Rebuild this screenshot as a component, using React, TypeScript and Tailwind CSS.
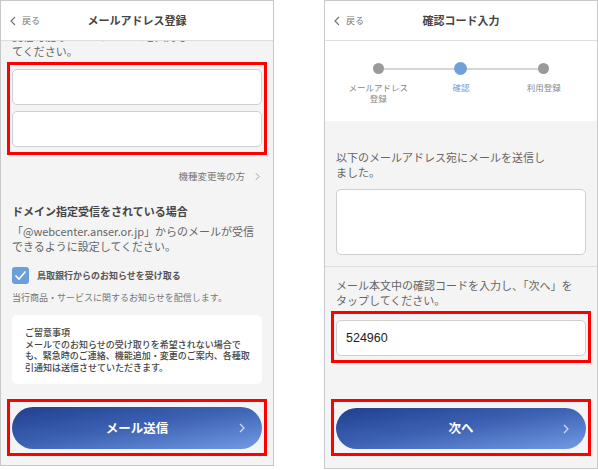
import React from "react";

const FONT = "font-['Noto_Sans_CJK_JP','Noto_Sans',sans-serif]";

function BackChevron() {
  return (
    <svg width="6" height="10" viewBox="0 0 6 10">
      <polyline points="5,1 1,5 5,9" fill="none" stroke="#777" strokeWidth="1.2" />
    </svg>
  );
}

function RightChevron({ color, w = 6, h = 10 }: { color: string; w?: number; h?: number }) {
  return (
    <svg width={w} height={h} viewBox="0 0 6 10">
      <polyline points="1,1 5,5 1,9" fill="none" stroke={color} strokeWidth="1.2" />
    </svg>
  );
}

function Header({ title }: { title: string }) {
  return (
    <div className="grid grid-cols-[1fr_auto_1fr] items-center h-[40px] shrink-0 bg-white border-b border-[#dedede] px-[9px]">
      <div className="flex items-center gap-[6px] text-[9px] text-[#777]">
        <BackChevron />
        <span>戻る</span>
      </div>
      <div className="text-[11px] font-bold text-[#444]">{title}</div>
      <div />
    </div>
  );
}

function GradButton({ label }: { label: string }) {
  return (
    <div className="relative flex items-center justify-center h-[42px] rounded-full bg-linear-to-br from-[#213f8e] via-[#3f64b5] to-[#739be4]">
      <span className="text-[12.5px] font-bold text-white">{label}</span>
      <div className="absolute right-[17px] top-0 bottom-0 flex items-center">
        <RightChevron color="#d2ddf5" w={6} h={10} />
      </div>
    </div>
  );
}

function LeftPhone() {
  return (
    <div className="w-[274px] h-[466px] shrink-0 border border-[#c8c8c8] flex flex-col overflow-hidden bg-[#f4f4f4]">
      <Header title="メールアドレス登録" />
      <div className="flex-1 overflow-hidden px-[11px]">
        <div className="mt-[-12px] text-[11px] leading-[15px] text-[#666] whitespace-nowrap">
          受信可能なメールアドレスを入力し
          <br />
          てください。
        </div>
        <div className="mt-[3px] -mx-[5px] border-[3px] border-[#ff0000] px-[2px] pt-[4px] pb-[5px] flex flex-col gap-[6px]">
          <div className="h-[36px] bg-white border border-[#cfcfcf] rounded-[5px]" />
          <div className="h-[36px] bg-white border border-[#cfcfcf] rounded-[5px]" />
        </div>
        <div className="mt-[13px] h-[16px] flex items-center justify-end gap-[10px] pr-[2px] text-[9.5px] text-[#777]">
          <span>機種変更等の方</span>
          <RightChevron color="#7aa6dc" w={5} h={9} />
        </div>
        <div className="mt-[19px] text-[11px] leading-[16px] font-bold text-[#444] whitespace-nowrap">
          ドメイン指定受信をされている場合
        </div>
        <div className="mt-[5px] text-[11px] leading-[15px] text-[#666] whitespace-nowrap">
          「@webcenter.anser.or.jp」からのメールが受信
          <br />
          できるように設定してください。
        </div>
        <div className="mt-[13px] flex items-center gap-[8px]">
          <div className="w-[17px] h-[17px] rounded-[3px] bg-[#6b9fd9] flex items-center justify-center">
            <svg width="13" height="11" viewBox="0 0 13 11">
              <polyline points="1.5,5.5 5,9 11.5,1.5" fill="none" stroke="white" strokeWidth="1.6" />
            </svg>
          </div>
          <span className="text-[9px] font-bold text-[#555]">鳥取銀行からのお知らせを受け取る</span>
        </div>
        <div className="mt-[7px] text-[9px] leading-[13px] text-[#777] whitespace-nowrap">
          当行商品・サービスに関するお知らせを配信します。
        </div>
        <div className="mt-[11px] bg-white rounded-[5px] px-[13px] pt-[12px] pb-[11px] text-[9px] leading-[11.5px] font-medium text-[#444] whitespace-nowrap">
          ご留意事項
          <br />
          メールでのお知らせの受け取りを希望されない場合で
          <br />
          も、緊急時のご連絡、機能追加・変更のご案内、各種取
          <br />
          引通知は送信させていただきます。
        </div>
        <div className="mt-[15px] -mx-[5px] border-[3px] border-[#ff0000] px-[2px] pt-[5px] pb-[4px]">
          <GradButton label="メール送信" />
        </div>
      </div>
    </div>
  );
}

function Step({ label, active }: { label: React.ReactNode; active?: boolean }) {
  return (
    <div className="flex flex-col items-center pt-[21px]">
      <div className="h-[13px] flex items-center justify-center">
        {active ? (
          <div className="w-[13px] h-[13px] rounded-full bg-[#6fa0d8]" />
        ) : (
          <div className="w-[11px] h-[11px] rounded-full bg-[#9a9a9a]" />
        )}
      </div>
      <div
        className={
          "mt-[7px] text-[8.5px] leading-[11px] text-center " +
          (active ? "text-[#6fa0d8]" : "text-[#888]")
        }
      >
        {label}
      </div>
    </div>
  );
}

function RightPhone() {
  return (
    <div className="w-[274px] h-[469px] shrink-0 border border-[#c8c8c8] flex flex-col overflow-hidden bg-[#f4f4f4]">
      <Header title="確認コード入力" />
      <div className="relative h-[80px] shrink-0 bg-white grid grid-cols-3 px-[12px]">
        <div className="absolute left-[54px] right-[54px] top-[26.5px] h-[2px] bg-[#d6d6d6]" />
        <div className="relative">
          <Step
            label={
              <>
                メールアドレス
                <br />
                登録
              </>
            }
          />
        </div>
        <div className="relative">
          <Step label="確認" active />
        </div>
        <div className="relative">
          <Step label="利用登録" />
        </div>
      </div>
      <div className="shrink-0 pt-[29px] px-[11px] pb-[11px] border-b border-[#dedede]">
        <div className="text-[11px] leading-[15px] text-[#666] whitespace-nowrap">
          以下のメールアドレス宛にメールを送信し
          <br />
          ました。
        </div>
        <div className="mt-[9px] h-[66px] bg-white border border-[#cfcfcf] rounded-[5px]" />
      </div>
      <div className="flex-1 pt-[11px] px-[11px]">
        <div className="text-[11px] leading-[15px] text-[#666] whitespace-nowrap">
          メール本文中の確認コードを入力し、「次へ」を
          <br />
          タップしてください。
        </div>
        <div className="mt-[3px] -mx-[5px] border-[3px] border-[#ff0000] px-[2px] pt-[6px] pb-[4px]">
          <div className="h-[36px] bg-white border border-[#cfcfcf] rounded-[5px] flex items-center pl-[9px]">
            <span className="font-['Liberation_Sans',sans-serif] text-[12.5px] text-[#222]">524960</span>
          </div>
        </div>
        <div className="mt-[36px] -mx-[5px] border-[3px] border-[#ff0000] px-[2px] pt-[6px] pb-[4px]">
          <div className="relative flex items-center justify-center h-[41px] rounded-full bg-linear-to-br from-[#213f8e] via-[#3f64b5] to-[#739be4]">
            <span className="text-[12.5px] font-bold text-white">次へ</span>
            <div className="absolute right-[17px] top-0 bottom-0 flex items-center">
              <RightChevron color="#d2ddf5" w={6} h={10} />
            </div>
          </div>
        </div>
      </div>
    </div>
  );
}

export default function App() {
  return (
    <div className={"w-[598px] h-[470px] bg-white flex items-start overflow-hidden " + FONT}>
      <LeftPhone />
      <div className="w-[50px] shrink-0" />
      <RightPhone />
    </div>
  );
}
